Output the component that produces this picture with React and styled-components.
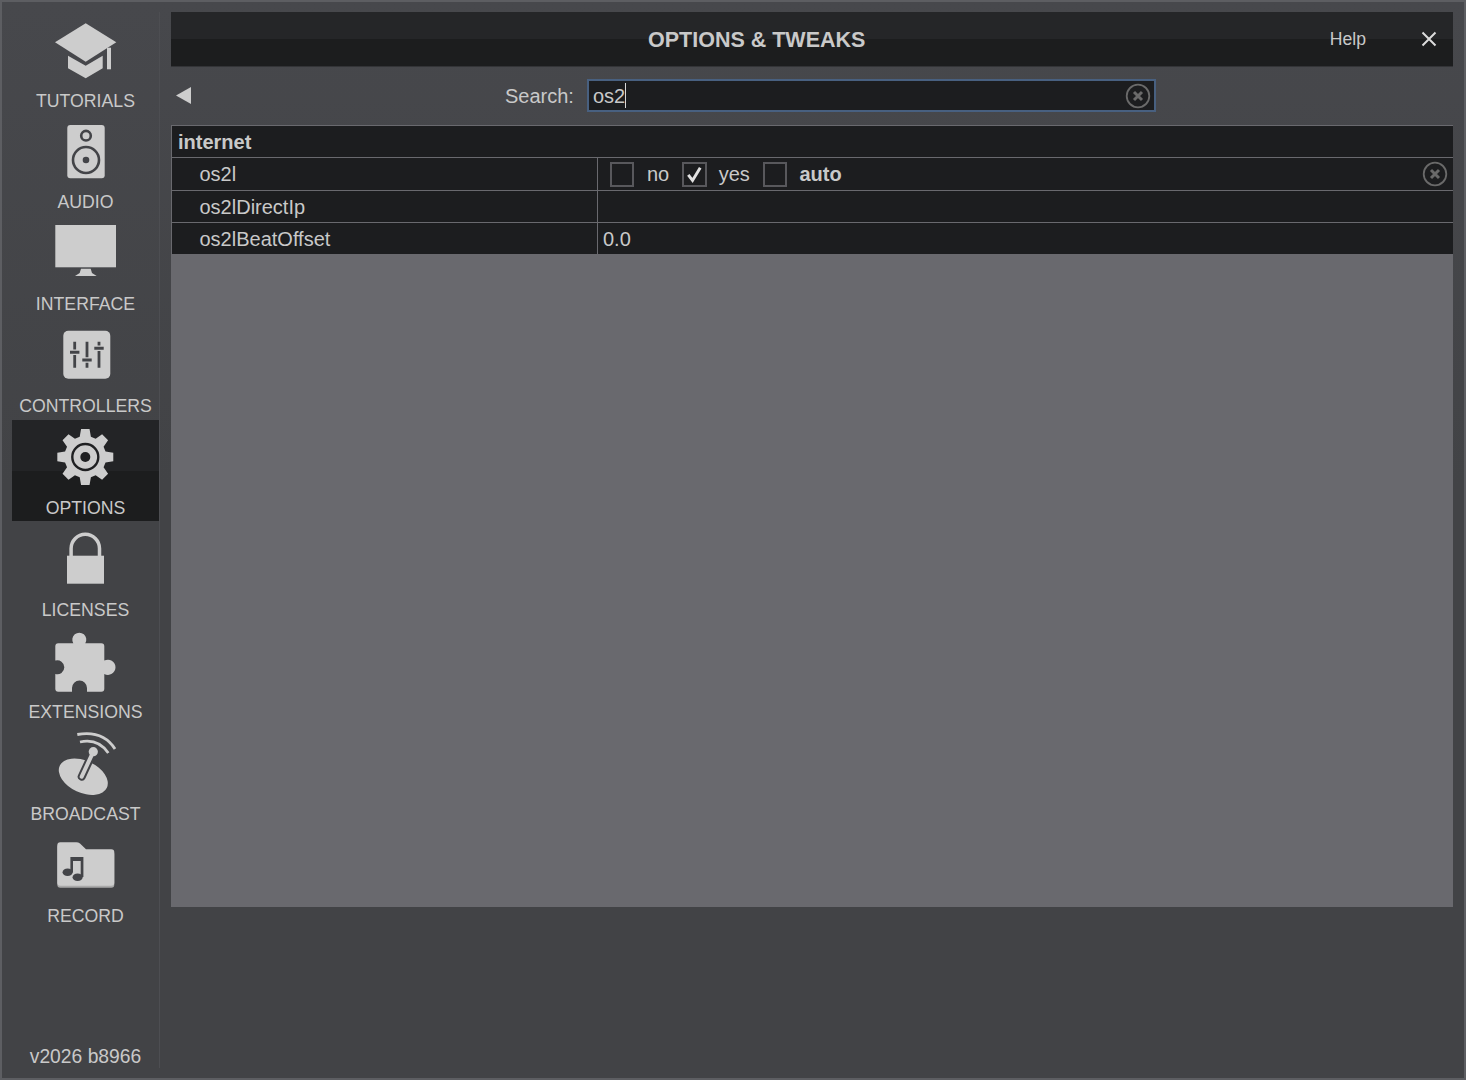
import styled, { createGlobalStyle } from "styled-components";

const LIGHT = "#cdcdcd";
const DARK = "#434448";

const GlobalStyle = createGlobalStyle`
  html, body {
    margin: 0;
    padding: 0;
    background: #424346;
  }
  * {
    box-sizing: border-box;
  }
`;

const Frame = styled.div`
  width: 1466px;
  height: 1080px;
  display: flex;
  border: 2px solid #5d5e62;
  background: linear-gradient(#47484c, #424346 45%);
  font-family: "Liberation Sans", Arial, sans-serif;
  color: #c9c9c9;
  overflow: hidden;
`;

const Nav = styled.nav`
  width: 148px;
  margin: 10px 0 10px 10px;
  display: flex;
  flex-direction: column;
  border-right: 1px solid #4d4e52;
`;

const NavItem = styled.div`
  height: 101px;
  margin-bottom: 1px;
  padding-top: 4px;
  display: flex;
  flex-direction: column;
  align-items: center;
  background: ${(p) => (p.$active ? "linear-gradient(#232426 50%, #1c1d1e 50%)" : "none")};
`;

const NavIcon = styled.svg`
  width: 65px;
  height: ${(p) => (p.$first ? 75 : 74)}px;
  flex: none;
  overflow: visible;
`;

const NavLabel = styled.span`
  font-size: 17.7px;
  line-height: 21px;
  white-space: nowrap;
`;

const Version = styled.div`
  margin-top: auto;
  font-size: 19.3px;
  line-height: 22px;
  text-align: center;
  white-space: nowrap;
`;

const Main = styled.main`
  width: 1282px;
  margin: 10px 0 0 11px;
  display: flex;
  flex-direction: column;
`;

const Header = styled.header`
  height: 54.5px;
  padding-left: 477px;
  display: flex;
  align-items: center;
  background: linear-gradient(#252628 50%, #1c1d1e 50%);
  border-bottom: 1px solid #333437;
`;

const Title = styled.h1`
  margin: 0;
  padding-top: 3px;
  font-size: 21.5px;
  font-weight: 700;
  white-space: nowrap;
`;

const HelpLink = styled.a`
  margin-left: auto;
  padding-top: 2px;
  font-size: 17.6px;
  color: #c9c9c9;
`;

const CloseIcon = styled.svg`
  width: 16px;
  height: 16px;
  margin: 0 16px 0 55px;
`;

const SearchRow = styled.div`
  height: 58.5px;
  padding: 12.5px 0 13px 5px;
  display: flex;
  align-items: center;
`;

const BackIcon = styled.svg`
  width: 15px;
  height: 17px;
  flex: none;
`;

const SearchLabel = styled.label`
  margin-left: 314px;
  padding-top: 2px;
  font-size: 20px;
`;

const SearchBox = styled.div`
  width: 569.5px;
  height: 33px;
  margin-left: 13px;
  padding: 0 3px 0 4px;
  display: flex;
  align-items: center;
  background: #1c1d1f;
  border: 2px solid #486080;
  font-size: 20px;
`;

const SearchText = styled.span`
  padding-top: 2px;
`;

const Caret = styled.span`
  width: 1px;
  height: 25px;
  background: #d8d8d8;
`;

const ClearIcon = styled.svg`
  width: 26px;
  height: 26px;
  flex: none;
  margin-left: auto;
`;

const Panel = styled.section`
  height: 782px;
  padding: 1px 0 0 1px;
  display: flex;
  flex-direction: column;
  gap: 1px;
  background: #69696e;
`;

const GroupRow = styled.div`
  height: 31.3px;
  padding: 2px 0 0 6px;
  display: flex;
  align-items: center;
  background: #1c1d1f;
  font-size: 20px;
  font-weight: 700;
`;

const Row = styled.div`
  height: 31.3px;
  display: grid;
  grid-template-columns: 425px 1fr;
  column-gap: 1px;
  font-size: 20px;
`;

const NameCell = styled.div`
  padding: 2px 0 0 27.5px;
  display: flex;
  align-items: center;
  background: #1c1d1f;
`;

const ValueCell = styled.div`
  padding: 2px 5px 0;
  display: flex;
  align-items: center;
  background: #1c1d1f;
`;

const Box = styled.span`
  width: 24.5px;
  height: 25px;
  flex: none;
  margin-left: ${(p) => p.$gap}px;
  display: flex;
  border: 2px solid #58585c;
`;

const OptionText = styled.span`
  margin-left: ${(p) => p.$gap}px;
  font-weight: ${(p) => (p.$bold ? 700 : 400)};
`;

const RowClear = styled(ClearIcon)`
  margin-top: -2px;
`;

const gearPath = () => {
  const cx = 32.3;
  const cy = 33;
  const pts = [];
  for (let i = 0; i < 8; i++) {
    const a = (i * Math.PI) / 4 - Math.PI / 2;
    const at = (r, d) => `${(cx + r * Math.cos(a + d)).toFixed(2)} ${(cy + r * Math.sin(a + d)).toFixed(2)}`;
    pts.push(`${i === 0 ? "M" : "L"}${at(21, -0.27)}`, `L${at(28.3, -0.15)}`, `L${at(28.3, 0.15)}`, `L${at(21, 0.27)}`);
  }
  return pts.join(" ") + " Z";
};

const TutorialsIcon = () => (
  <NavIcon $first viewBox="0 0 65 75" fill={LIGHT}>
    <path d="M2 26.3 32.7 7.3 63.3 26.3 32.7 45.7Z" />
    <path d="M15 39.7 32.7 49.7 49.7 39.7V52.3L32.7 62.3 15 52.3Z" />
    <rect x="54" y="31.7" width="4" height="21.6" />
  </NavIcon>
);

const AudioIcon = () => (
  <NavIcon viewBox="0 0 65 74">
    <rect x="14.3" y="7" width="37.4" height="53.3" rx="3" fill={LIGHT} />
    <circle cx="33" cy="17.7" r="4.8" fill="none" stroke={DARK} strokeWidth="2.6" />
    <circle cx="33" cy="42" r="13" fill="none" stroke={DARK} strokeWidth="2.6" />
    <circle cx="33" cy="42" r="3.3" fill={DARK} />
  </NavIcon>
);

const InterfaceIcon = () => (
  <NavIcon viewBox="0 0 65 74" fill={LIGHT}>
    <rect x="2.3" y="5" width="60.7" height="42.3" />
    <path d="M28 48.7H37.7L39 53 43.7 56H22L26.7 53Z" />
  </NavIcon>
);

const ControllersIcon = () => (
  <NavIcon viewBox="0 0 65 74">
    <rect x="10.3" y="8.7" width="47" height="48" rx="5" fill={LIGHT} />
    <g stroke={DARK} strokeWidth="2.8" fill="none">
      <path d="M21.7 19.7V27.5M21.7 33V45.7M34 19.7V35.2M34 40.8V45.7M46 19.7V23.5M46 29V45.7" />
      <path strokeWidth="3" d="M17 30.3H26.4M29.3 38H38.7M41.3 26.3H50.7" />
    </g>
  </NavIcon>
);

const OptionsIcon = () => (
  <NavIcon viewBox="0 0 65 74">
    <path d={gearPath()} fill={LIGHT} />
    <circle cx="32.3" cy="33" r="13" fill="none" stroke="#1f2022" strokeWidth="2.4" />
    <circle cx="32.3" cy="33" r="5" fill="#1f2022" />
  </NavIcon>
);

const LicensesIcon = () => (
  <NavIcon viewBox="0 0 65 74">
    <path d="M18.1 30V22.5A14.2 14.2 0 0 1 46.5 22.5V30" fill="none" stroke={LIGHT} strokeWidth="3.5" />
    <rect x="14" y="29.7" width="37" height="28" fill={LIGHT} />
  </NavIcon>
);

const ExtensionsIcon = () => (
  <NavIcon viewBox="0 0 65 74" fill={LIGHT}>
    <path d="M5.3 15.3H20.3A7 7 0 1 1 32.3 15.3H48.3A3 3 0 0 1 51.3 18.3V32.6A7.6 7.6 0 1 1 51.3 46V60.7A3 3 0 0 1 48.3 63.7H34V60A7.5 7.5 0 0 0 19 60V63.7H5.3A3 3 0 0 1 2.3 60.7V46A7 7 0 1 0 2.3 32.6V18.3A3 3 0 0 1 5.3 15.3Z" />
  </NavIcon>
);

const BroadcastIcon = () => (
  <NavIcon viewBox="0 0 65 74">
    <ellipse cx="30.3" cy="46.7" rx="26" ry="16" transform="rotate(25 30.3 46.7)" fill={LIGHT} />
    <path d="M28.7 46.7 40.3 21.7" stroke={DARK} strokeWidth="8" strokeLinecap="round" />
    <path d="M28.7 46.7 40.3 21.7" stroke={LIGHT} strokeWidth="4" strokeLinecap="round" />
    <circle cx="40.3" cy="21.7" r="4.6" fill={LIGHT} />
    <path d="M24.3 4.5Q50 0 62 19M27 12Q45 8 55.3 23" fill="none" stroke={LIGHT} strokeWidth="2.8" />
  </NavIcon>
);

const RecordIcon = () => (
  <NavIcon viewBox="0 0 65 74">
    <path d="M7.3 12.3H23.3Q25.3 12.3 27 13.5L33 19.3H58.3A3 3 0 0 1 61.3 22.3V52.7A3 3 0 0 1 58.3 55.7H7.3A3 3 0 0 1 4.3 52.7V15.3A3 3 0 0 1 7.3 12.3Z" fill="#a9a9a9" />
    <path d="M7.3 10.3H23.3Q25.3 10.3 27 11.5L33 17.3H58.3A3 3 0 0 1 61.3 20.3V50.7A3 3 0 0 1 58.3 53.7H7.3A3 3 0 0 1 4.3 50.7V13.3A3 3 0 0 1 7.3 10.3Z" fill={LIGHT} />
    <g fill={DARK} transform="translate(-1 0)">
      <ellipse cx="15.6" cy="40.3" rx="5" ry="3.8" />
      <ellipse cx="25.6" cy="45.3" rx="5" ry="3.8" />
      <path d="M18.4 25H31.4V45H28.7V29H21V40.5H18.4Z" />
    </g>
  </NavIcon>
);

const navItems = [
  { label: "TUTORIALS", Icon: TutorialsIcon },
  { label: "AUDIO", Icon: AudioIcon },
  { label: "INTERFACE", Icon: InterfaceIcon },
  { label: "CONTROLLERS", Icon: ControllersIcon },
  { label: "OPTIONS", Icon: OptionsIcon, active: true },
  { label: "LICENSES", Icon: LicensesIcon },
  { label: "EXTENSIONS", Icon: ExtensionsIcon },
  { label: "BROADCAST", Icon: BroadcastIcon },
  { label: "RECORD", Icon: RecordIcon },
];

const ClearGlyph = () => (
  <>
    <circle cx="13" cy="13" r="11.3" fill="none" stroke="#6a6a6a" strokeWidth="1.8" />
    <path d="M9 9 17 17M17 9 9 17" stroke="#6a6a6a" strokeWidth="3" />
  </>
);

const App = () => {
  return (
    <Frame>
      <GlobalStyle />
      <Nav>
        {navItems.map(({ label, Icon, active }) => (
          <NavItem key={label} $active={active}>
            <Icon />
            <NavLabel>{label}</NavLabel>
          </NavItem>
        ))}
        <Version>v2026 b8966</Version>
      </Nav>
      <Main>
        <Header>
          <Title>OPTIONS &amp; TWEAKS</Title>
          <HelpLink>Help</HelpLink>
          <CloseIcon viewBox="0 0 16 16">
            <path d="M1.5 1.5 14.5 14.5M14.5 1.5 1.5 14.5" stroke="#dcdcdc" strokeWidth="2" />
          </CloseIcon>
        </Header>
        <SearchRow>
          <BackIcon viewBox="0 0 15 17">
            <path d="M15 0V17L0 8.5Z" fill={LIGHT} />
          </BackIcon>
          <SearchLabel>Search:</SearchLabel>
          <SearchBox>
            <SearchText>os2</SearchText>
            <Caret />
            <ClearIcon viewBox="0 0 26 26">
              <ClearGlyph />
            </ClearIcon>
          </SearchBox>
        </SearchRow>
        <Panel>
          <GroupRow>internet</GroupRow>
          <Row>
            <NameCell>os2l</NameCell>
            <ValueCell>
              <Box $gap={6.5} />
              <OptionText $gap={13}>no</OptionText>
              <Box $gap={13}>
                <svg viewBox="0 0 24 24" width="21" height="21">
                  <path d="M5 12.5 10 19 19 4" fill="none" stroke="#e2e2e2" strokeWidth="3.4" />
                </svg>
              </Box>
              <OptionText $gap={12}>yes</OptionText>
              <Box $gap={13} />
              <OptionText $gap={12} $bold>auto</OptionText>
              <RowClear viewBox="0 0 26 26">
                <ClearGlyph />
              </RowClear>
            </ValueCell>
          </Row>
          <Row>
            <NameCell>os2lDirectIp</NameCell>
            <ValueCell />
          </Row>
          <Row>
            <NameCell>os2lBeatOffset</NameCell>
            <ValueCell>0.0</ValueCell>
          </Row>
        </Panel>
      </Main>
    </Frame>
  );
};

export default App;
